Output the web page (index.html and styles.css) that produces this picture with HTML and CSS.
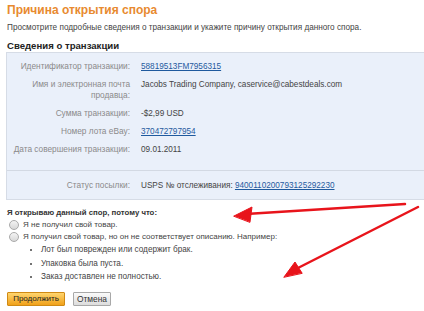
FILE: index.html
```html
<!DOCTYPE html>
<html>
<head>
<meta charset="utf-8">
<link rel="stylesheet" href="styles.css">
</head>
<body>
<div class="page">
  <h1 class="title">Причина открытия спора</h1>
  <p class="intro">Просмотрите подробные сведения о транзакции и укажите причину открытия данного спора.</p>
  <h2 class="section">Сведения о транзакции</h2>
  <div class="box">
    <div class="rows">
      <div class="row"><div class="lbl">Идентификатор транзакции:</div><div class="val"><a href="#">58819513FM7956315</a></div></div>
      <div class="row"><div class="lbl">Имя и электронная почта<br>продавца:</div><div class="val">Jacobs Trading Company, caservice@cabestdeals.com</div></div>
      <div class="row"><div class="lbl">Сумма транзакции:</div><div class="val">-$2,99 USD</div></div>
      <div class="row"><div class="lbl">Номер лота eBay:</div><div class="val"><a href="#">370472797954</a></div></div>
      <div class="row"><div class="lbl">Дата совершения транзакции:</div><div class="val">09.01.2011</div></div>
    </div>
    <div class="status row"><div class="lbl">Статус посылки:</div><div class="val">USPS № отслеживания: <a href="#">9400110200793125292230</a></div></div>
  </div>
  <div class="reason">
    <div class="q">Я открываю данный спор, потому что:</div>
    <label class="opt"><span class="radio"></span>Я не получил свой товар.</label>
    <label class="opt"><span class="radio"></span>Я получил свой товар, но он не соответствует описанию. Например:</label>
    <ul class="bullets">
      <li>Лот был поврежден или содержит брак.</li>
      <li>Упаковка была пуста.</li>
      <li>Заказ доставлен не полностью.</li>
    </ul>
  </div>
  <div class="buttons">
    <button class="btn primary">Продолжить</button>
    <button class="btn cancel">Отмена</button>
  </div>
</div>
<svg class="arrows" width="424" height="311" viewBox="0 0 424 311">
  <g stroke="#e8141b" stroke-width="2.5" stroke-linecap="round" fill="#e8141b">
    <line x1="405" y1="204" x2="246" y2="214"/>
    <polygon points="234,216 252,207 250,222" stroke-width="1"/>
    <line x1="418" y1="207" x2="294" y2="270"/>
    <polygon points="284,277 295,262 302,273" stroke-width="1"/>
  </g>
</svg>
</body>
</html>
```
FILE: styles.css
```css
html, body { margin: 0; padding: 0; background: #fff; }
body { font-family: "Liberation Sans", Arial, sans-serif; color: #333; width: 424px; height: 311px; overflow: hidden; position: relative; }
.page { padding: 3px 0 0 7px; }
.title { margin: 0; font-size: 12px; font-weight: bold; color: #e88a30; line-height: 15px; }
.intro { margin: 3.5px 0 0; font-size: 8.2px; color: #444; line-height: 11px; }
.section { margin: 7px 0 0; font-size: 9.6px; font-weight: bold; color: #222; line-height: 12px; }
.box { margin: 0 0 0 -1px; background: #eaf0fa; border: 1px solid #d6dce6; border-right: none; }
.rows { padding: 8.5px 0 14.5px; border-bottom: 1px solid #d3d9e3; }
.row { display: flex; line-height: 11px; margin-bottom: 7px; }
.rows .row:last-child { margin-bottom: 0; }
.lbl { width: 123px; text-align: right; color: #8a8a8a; flex: none; font-size: 8.3px; white-space: nowrap; }
.val { padding-left: 11px; color: #444; font-size: 8.2px; }
.val a { color: #1f5a9e; text-decoration: underline; }
.status { padding: 9.5px 0 7.5px; margin: 0; }
.reason { margin-top: 7px; font-size: 8px; line-height: 12px; color: #444; }
.q { font-weight: bold; color: #333; font-size: 7.8px; line-height: 12.5px; }
.opt { display: flex; align-items: center; }
.radio { width: 8px; height: 8px; border-radius: 50%; border: 1px solid #aaa; background: linear-gradient(#f4f4f4, #d8d8d8); margin: 0 4px 0 2px; }
.bullets { margin: 0; padding: 0 0 0 34px; line-height: 13.5px; font-size: 8.2px; }
.bullets li { list-style: disc; }
.buttons { display: flex; gap: 8px; margin-top: 8px; }
.btn { font-family: "Liberation Sans", Arial, sans-serif; font-size: 8px; height: 14px; padding: 0; border: 1px solid #a8a8a8; background: linear-gradient(#fafafa, #dcdcdc); color: #333; border-radius: 1px; line-height: 12px; }
.btn.primary { width: 58px; background: linear-gradient(#ffd56e, #f0a11a); border-color: #d08a14; color: #222; }
.btn.cancel { width: 38px; font-size: 8.4px; }
.arrows { position: absolute; left: 0; top: 0; pointer-events: none; }
```
